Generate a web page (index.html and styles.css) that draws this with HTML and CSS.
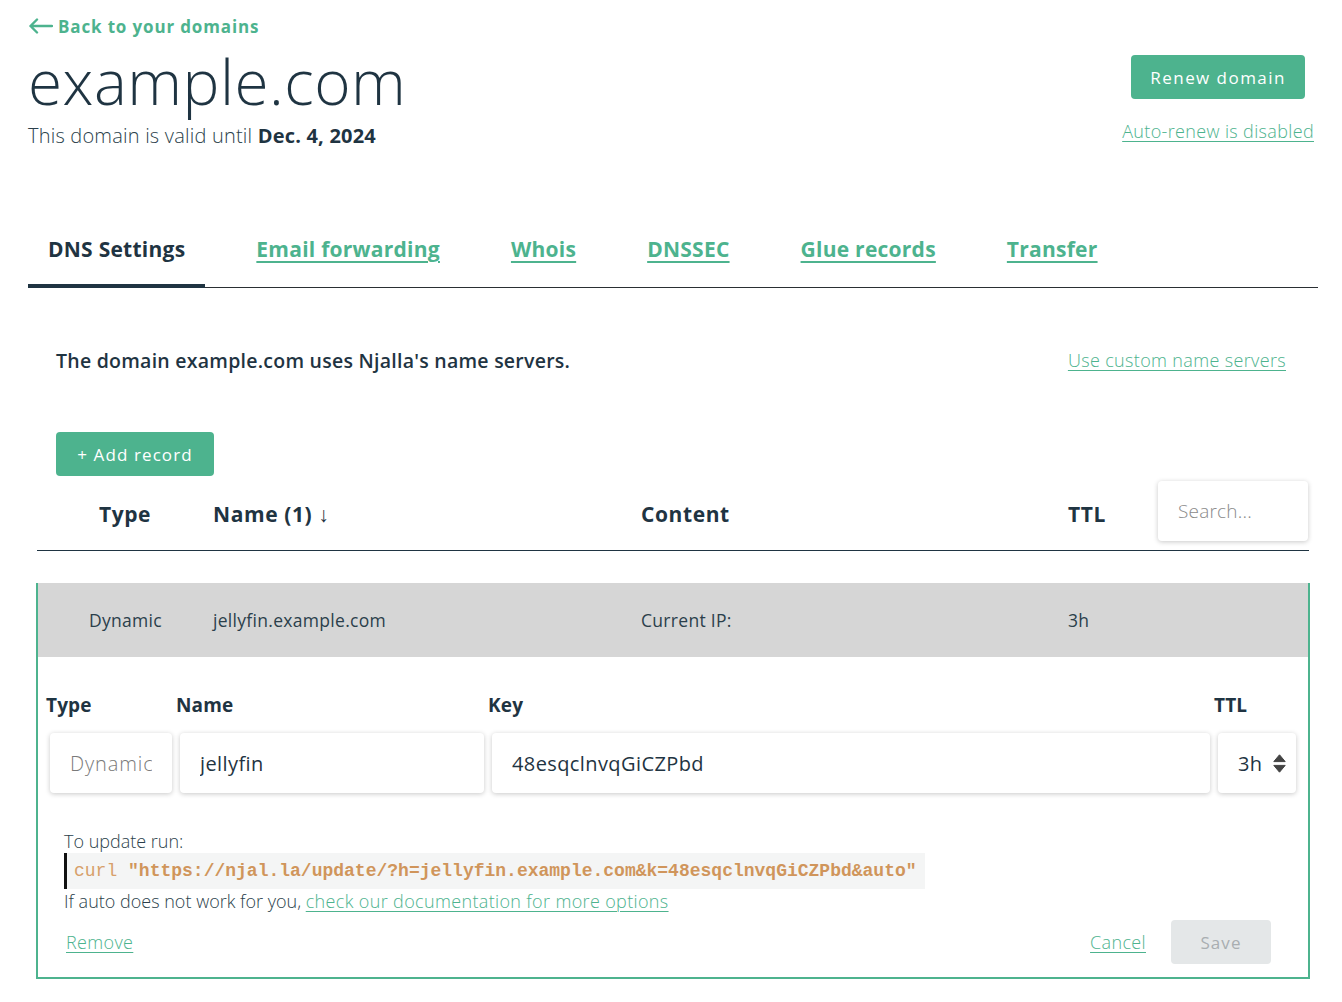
FILE: index.html
```html
<!DOCTYPE html>
<html lang="en">
<head>
<meta charset="utf-8">
<title>example.com – DNS Settings</title>
<link rel="stylesheet" href="styles.css">
</head>
<body>
<div class="page">
  <a class="back" href="#">
    <svg class="back-arrow" width="25" height="16" viewBox="0 0 25 16" aria-hidden="true">
      <path d="M24 8 H2.5 M9 1.5 L2.5 8 L9 14.5" fill="none" stroke="#4db38e" stroke-width="2.4" stroke-linecap="round" stroke-linejoin="round"/>
    </svg>
    <span>Back to your domains</span>
  </a>

  <header class="domain-head">
    <div class="title-block">
      <h1 class="domain-title">example.com</h1>
      <p class="valid">This domain is valid until <strong>Dec. 4, 2024</strong></p>
    </div>
    <div class="renew-block">
      <button class="btn btn-green btn-renew">Renew domain</button>
      <a class="link" href="#">Auto-renew is disabled</a>
    </div>
  </header>

  <nav class="tabs">
    <span class="tab active">DNS Settings</span>
    <a class="tab" href="#">Email forwarding</a>
    <a class="tab" href="#">Whois</a>
    <a class="tab" href="#">DNSSEC</a>
    <a class="tab" href="#">Glue records</a>
    <a class="tab" href="#">Transfer</a>
  </nav>

  <section class="dns">
    <div class="ns-row">
      <p class="ns-text">The domain example.com uses Njalla's name servers.</p>
      <a class="link" href="#">Use custom name servers</a>
    </div>

    <button class="btn btn-green btn-add">+ Add record</button>

    <div class="table-head">
      <span class="th th-type">Type</span>
      <span class="th">Name (1) <span class="sort">↓</span></span>
      <span class="th">Content</span>
      <span class="th">TTL</span>
      <input class="field search" type="text" placeholder="Search...">
    </div>

    <div class="record">
      <div class="record-row">
        <span class="td td-type">Dynamic</span>
        <span class="td">jellyfin.example.com</span>
        <span class="td">Current IP:</span>
        <span class="td">3h</span>
      </div>

      <div class="edit-form">
        <div class="fcol">
          <label class="flabel">Type</label>
          <input class="field f-type" type="text" value="Dynamic" disabled>
        </div>
        <div class="fcol">
          <label class="flabel">Name</label>
          <input class="field" type="text" value="jellyfin">
        </div>
        <div class="fcol">
          <label class="flabel">Key</label>
          <input class="field" type="text" value="48esqclnvqGiCZPbd">
        </div>
        <div class="fcol">
          <label class="flabel">TTL</label>
          <div class="field f-select">
            <span>3h</span>
            <svg width="13" height="19" viewBox="0 0 13 19" aria-hidden="true">
              <path d="M6.5 0.8 L12.2 7.6 H0.8 Z" fill="#444" stroke="#444" stroke-width="1" stroke-linejoin="round"/>
              <path d="M0.8 11.4 H12.2 L6.5 18.2 Z" fill="#444" stroke="#444" stroke-width="1" stroke-linejoin="round"/>
            </svg>
          </div>
        </div>
      </div>

      <div class="update">
        <p class="update-line">To update run:</p>
        <code class="cmd"><span class="cmd-kw">curl</span> <span class="cmd-str">"https://njal.la/update/?h=jellyfin.example.com&amp;k=48esqclnvqGiCZPbd&amp;auto"</span></code>
        <p class="update-line">If auto does not work for you, <a class="link" href="#">check our documentation for more options</a></p>
      </div>

      <div class="actions">
        <a class="link" href="#">Remove</a>
        <div class="actions-right">
          <a class="link" href="#">Cancel</a>
          <button class="btn btn-save" disabled>Save</button>
        </div>
      </div>
    </div>
  </section>
</div>
</body>
</html>
```

FILE: styles.css
```css
* { box-sizing: border-box; }

html, body {
  margin: 0;
  padding: 0;
  background: #ffffff;
}

body {
  font-family: "Open Sans", "Liberation Sans", sans-serif;
  font-weight: 300;
  color: #1f3442;
}

.page {
  padding: 14px 24px 0 28px;
}

/* links */
.link {
  color: #4db38e;
  text-decoration: underline;
  text-underline-offset: 3px;
  text-decoration-thickness: 1px;
  font-size: 18px;
  line-height: 24px;
  font-weight: 300;
  letter-spacing: 0.35px;
}

/* back */
.back {
  display: flex;
  align-items: center;
  gap: 5px;
  height: 24px;
  color: #4db38e;
  text-decoration: none;
  font-family: "Open Sans", sans-serif;
  font-weight: 700;
  font-size: 17px;
  letter-spacing: 0.85px;
}

/* header */
.domain-head {
  display: flex;
  justify-content: space-between;
  align-items: flex-start;
}

.domain-title {
  margin: 0;
  font-size: 62px;
  line-height: 86px;
  font-weight: 300;
  letter-spacing: 0.5px;
  color: #1f3442;
}

.valid {
  margin: 0;
  font-size: 20px;
  line-height: 24px;
  letter-spacing: 0.2px;
  color: #2b3f4b;
}

.valid strong {
  font-weight: 700;
  color: #1f3442;
}

.renew-block {
  display: flex;
  flex-direction: column;
  align-items: center;
  gap: 20px;
  margin-top: 17px;
  margin-right: 4px;
}

/* buttons */
.btn {
  border: none;
  border-radius: 4px;
  height: 44px;
  font-family: "Open Sans", sans-serif;
  font-size: 17px;
  font-weight: 400;
  letter-spacing: 1.1px;
  padding: 0 10px;
  cursor: pointer;
}

.btn-green {
  background: #4db38e;
  color: #ffffff;
}

.btn-renew {
  width: 174px;
  letter-spacing: 1.45px;
}

.btn-add {
  width: 158px;
  margin: 60px 0 0 28px;
  display: block;
}

.btn-save {
  width: 100px;
  background: #e4e7e8;
  color: #a9aeb1;
}

/* tabs */
.tabs {
  display: flex;
  gap: 31px;
  margin-top: 64px;
  border-bottom: 1px solid #2a2f33;
}

.tab {
  display: flex;
  align-items: center;
  height: 76px;
  padding: 2px 20px 0;
  margin-bottom: -1px;
  border-bottom: 4px solid transparent;
  font-family: "Open Sans", sans-serif;
  font-weight: 700;
  font-size: 21px;
  letter-spacing: 0.25px;
  color: #4db38e;
  text-decoration: underline;
  text-underline-offset: 4px;
  text-decoration-thickness: 2px;
}

.tab.active {
  color: #1f3442;
  text-decoration: none;
  border-bottom-color: #1f3442;
}

/* dns section */
.ns-row {
  display: flex;
  justify-content: space-between;
  align-items: center;
  margin-top: 60px;
  padding: 0 32px 0 28px;
  height: 24px;
}

.ns-text {
  margin: 0;
  font-size: 19.5px;
  font-weight: 600;
  letter-spacing: 0.25px;
  color: #1f3442;
}

.table-head {
  display: grid;
  grid-template-columns: 176px 428px 427px 90px 150px;
  align-items: center;
  margin: 5px 9px 0 9px;
  padding-bottom: 9px;
  border-bottom: 1px solid #1f3442;
}

.th {
  font-family: "Open Sans", sans-serif;
  font-weight: 700;
  font-size: 21px;
  letter-spacing: 0.6px;
  color: #1f3442;
  padding-top: 5px;
}

.th-type {
  text-align: center;
}

.sort {
  font-weight: 400;
}

.field {
  border: none;
  border-radius: 4px;
  background: #ffffff;
  box-shadow: 0 1px 5px rgba(0, 0, 0, 0.22);
  height: 60px;
  padding: 0 20px;
  font-family: "Open Sans", sans-serif;
  font-weight: 400;
  font-size: 20px;
  letter-spacing: 0.4px;
  color: #1f3442;
  width: 100%;
  outline: none;
}

.search {
  width: 150px;
  font-weight: 300;
  font-size: 19px;
  letter-spacing: 0.2px;
}

.search::placeholder {
  color: #8a8a8a;
}

/* record */
.record {
  margin: 32px 8px 0 8px;
  border: 2px solid #4db38e;
  border-top: none;
  padding-bottom: 13px;
}

.record-row {
  display: grid;
  grid-template-columns: 175px 428px 427px 1fr;
  align-items: center;
  height: 74px;
  background: #d6d6d6;
}

.td {
  font-size: 17.5px;
  font-weight: 400;
  letter-spacing: 0.3px;
  color: #2b3f4b;
}

.td-type {
  text-align: center;
}

.edit-form {
  display: grid;
  grid-template-columns: 130px 312px 726px 86px;
  padding: 0 8px;
  margin-top: 36px;
}

.fcol {
  display: flex;
  flex-direction: column;
  gap: 16px;
}

.flabel {
  font-size: 19px;
  line-height: 24px;
  font-weight: 700;
  letter-spacing: 0.15px;
  color: #1f3442;
}

.fcol .field {
  margin: 0 4px;
  width: auto;
}

.f-type {
  font-weight: 300;
  letter-spacing: 0.9px;
  color: #7a7a7a;
}

.f-type:disabled {
  background: #ffffff;
  color: #7a7a7a;
}

.f-select {
  display: flex;
  align-items: center;
  justify-content: space-between;
  padding: 0 10px 0 20px;
}

.update {
  padding: 36px 26px 0 26px;
}

.update-line {
  margin: 0;
  font-size: 18px;
  line-height: 24px;
  color: #2b3f4b;
}

.cmd {
  display: inline-block;
  height: 36px;
  line-height: 36px;
  background: #f4f5f5;
  border-left: 3px solid #111111;
  padding: 0 8px 0 7px;
  font-family: "Liberation Mono", monospace;
  font-size: 18px;
  white-space: pre;
  vertical-align: top;
}

.cmd-kw {
  color: #d7a06a;
  font-weight: 400;
}

.cmd-str {
  color: #d0955b;
  font-weight: 700;
}

.actions {
  display: flex;
  justify-content: space-between;
  align-items: center;
  margin-top: 7px;
  padding: 0 37px 0 28px;
}

.actions-right {
  display: flex;
  align-items: center;
  gap: 25px;
}
```
